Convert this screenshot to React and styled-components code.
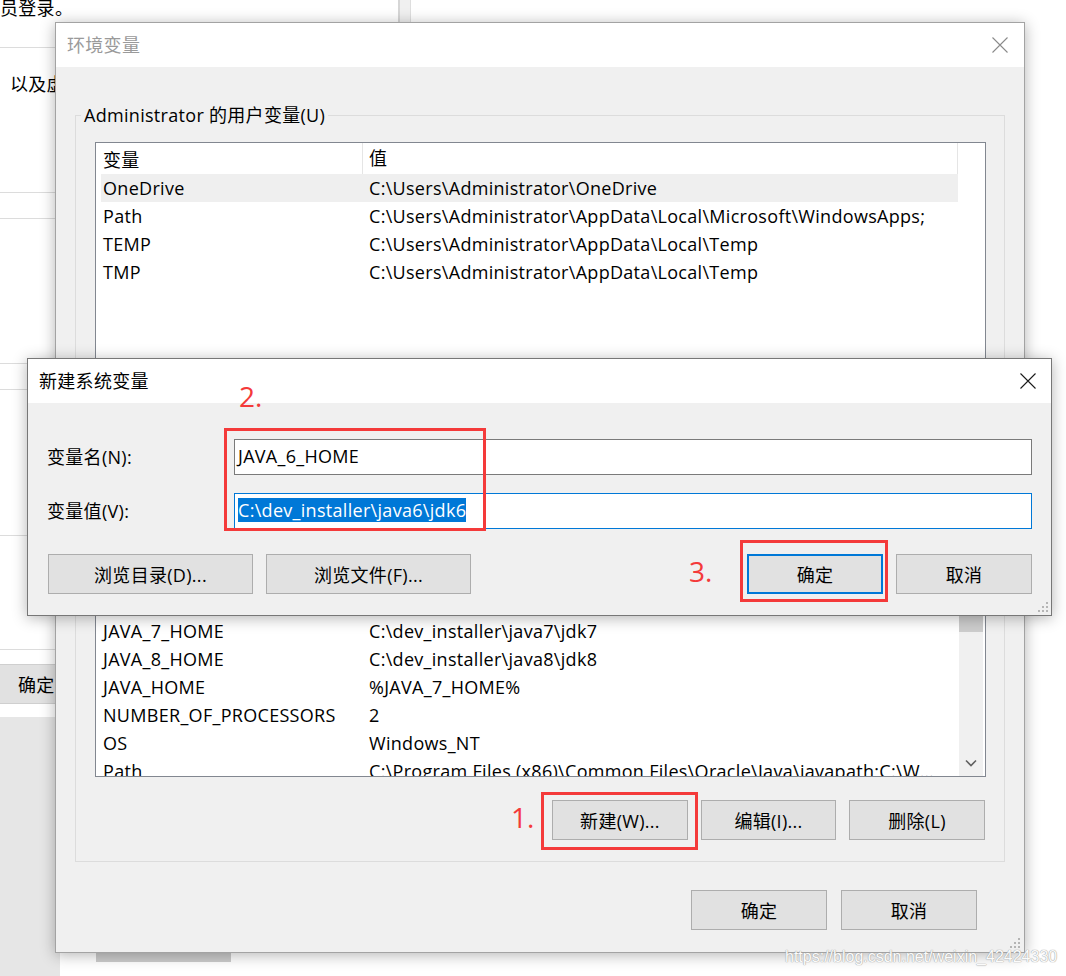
import React from "react";
import styled, { createGlobalStyle } from "styled-components";

const GlobalStyle = createGlobalStyle`
  html, body {
    margin: 0;
    padding: 0;
    background: #fff;
  }
  body {
    font-family: "Open Sans", "Noto Sans CJK SC", sans-serif;
    font-size: 18px;
    letter-spacing: 0.3px;
    color: #000;
  }
  * {
    box-sizing: border-box;
  }
`;

const userVars = [
  ["OneDrive", "C:\\Users\\Administrator\\OneDrive"],
  ["Path", "C:\\Users\\Administrator\\AppData\\Local\\Microsoft\\WindowsApps;"],
  ["TEMP", "C:\\Users\\Administrator\\AppData\\Local\\Temp"],
  ["TMP", "C:\\Users\\Administrator\\AppData\\Local\\Temp"],
];

const systemVars = [
  ["CLASSPATH", ".;%JAVA_HOME%\\lib;%JAVA_HOME%\\lib\\tools.jar"],
  ["ComSpec", "C:\\Windows\\system32\\cmd.exe"],
  ["DriverData", "C:\\Windows\\System32\\Drivers\\DriverData"],
  ["JAVA_7_HOME", "C:\\dev_installer\\java7\\jdk7"],
  ["JAVA_8_HOME", "C:\\dev_installer\\java8\\jdk8"],
  ["JAVA_HOME", "%JAVA_7_HOME%"],
  ["NUMBER_OF_PROCESSORS", "2"],
  ["OS", "Windows_NT"],
  ["Path", "C:\\Program Files (x86)\\Common Files\\Oracle\\Java\\javapath;C:\\Windows\\system32"],
];

// desktop canvas
const Desktop = styled.div`
  position: relative;
  width: 1066px;
  height: 976px;
  overflow: hidden;
  background: #fff;
`;

// window in the back (mostly hidden)
const BackWindow = styled.div`
  position: absolute;
  left: 0;
  top: 0;
  width: 411px;
  height: 717px;
  display: flex;
  background: #fff;
`;

const BackContent = styled.div`
  flex: 1;
  display: flex;
  flex-direction: column;
`;

const BackStrip = styled.div`
  width: 13px;
  background: #f0f0f0;
  border-left: 2px solid #d6d6d6;
  border-right: 1px solid #dedede;
`;

const BackRow = styled.div`
  height: ${p => p.$h}px;
  flex-shrink: 0;
  border-bottom: ${p => (p.$line ? "1px solid #dcdcdc" : "none")};
  padding-left: ${p => p.$indent || 0}px;
  padding-top: ${p => p.$top || 0}px;
  line-height: 24px;
  white-space: nowrap;
  overflow: hidden;
`;

const BackButton = styled.div`
  height: 40px;
  flex-shrink: 0;
  display: flex;
  align-items: center;
  padding-left: 18px;
  background: #e1e1e1;
  border-top: 1px solid #cfcfcf;
  border-bottom: 1px solid #cfcfcf;
`;

const SidePane = styled.div`
  position: absolute;
  left: 0;
  top: 717px;
  width: 60px;
  height: 259px;
  background: #e6e6e6;
`;

const TaskStub = styled.div`
  position: absolute;
  left: 96px;
  top: 952px;
  width: 135px;
  height: 10px;
  background: #cccccc;
`;

// dialogs
const Dialog = styled.div`
  position: absolute;
  left: ${p => p.$x}px;
  top: ${p => p.$y}px;
  width: ${p => p.$w}px;
  height: ${p => p.$h}px;
  display: flex;
  flex-direction: column;
  background: #f0f0f0;
  border: 1px solid ${p => (p.$active ? "#777777" : "#a3a3a3")};
  box-shadow: 0 2px 14px rgba(0, 0, 0, 0.3);
`;

const TitleBar = styled.div`
  height: 44px;
  flex-shrink: 0;
  display: flex;
  align-items: center;
  justify-content: space-between;
  padding: 0 ${p => p.$closeGap}px 0 11px;
  background: #fff;
`;

const Title = styled.span`
  color: ${p => (p.$inactive ? "#9a9a9a" : "#000")};
  font-size: 18px;
  padding-bottom: 3px;
`;

const EnvBody = styled.div`
  flex: 1;
  display: flex;
  flex-direction: column;
  padding: 36px 19px 0 19px;
`;

const GroupBox = styled.fieldset`
  margin: 0;
  padding: 0;
  min-width: 0;
  border: 1px solid #dcdcdc;
`;

const Legend = styled.legend`
  margin-left: 5px;
  padding: 0 3px;
  line-height: 24px;
  font-size: 18px;
`;

const GroupContent = styled.div`
  display: flex;
  flex-direction: column;
  padding: 15px 18px 21px 19px;
`;

const ListBox = styled.div`
  height: ${p => p.$h}px;
  margin-top: ${p => p.$mt || 0}px;
  display: flex;
  background: #fff;
  border: 1px solid #828790;
  overflow: hidden;
`;

const ListBody = styled.div`
  flex: 1;
  min-width: 0;
  padding-left: 5px;
  overflow: hidden;
`;

const HeaderRow = styled.div`
  height: 31px;
  display: flex;
  align-items: stretch;
  border-right: 1px solid #e5e5e5;
`;

const Row = styled.div`
  height: 28px;
  display: flex;
  align-items: center;
  background: ${p => (p.$selected ? "#efefef" : "transparent")};
`;

const NameCell = styled.div`
  width: 262px;
  flex-shrink: 0;
  padding-left: 2px;
  display: flex;
  align-items: center;
  white-space: nowrap;
  border-right: ${p => (p.$head ? "1px solid #e5e5e5" : "none")};
`;

const ValueCell = styled.div`
  flex: 1;
  min-width: 0;
  padding: 0 20px 0 6px;
  white-space: nowrap;
  overflow: hidden;
  text-overflow: ellipsis;
  line-height: ${p => (p.$head ? "31px" : "28px")};
`;

const Gutter = styled.div`
  width: 27px;
  flex-shrink: 0;
  display: flex;
  padding: 0 2px 0 1px;
`;

const Track = styled.div`
  flex: 1;
  display: flex;
  flex-direction: column;
  justify-content: space-between;
  align-items: center;
  background: #f0f0f0;
`;

const Thumb = styled.div`
  align-self: stretch;
  height: 90px;
  margin-top: 40px;
  background: #cdcdcd;
`;

const ChevronWrap = styled.div`
  height: 26px;
  display: flex;
  align-items: center;
  justify-content: center;
`;

const ButtonRow = styled.div`
  display: flex;
  justify-content: flex-end;
  gap: ${p => p.$gap || 13}px;
  margin-top: ${p => p.$mt || 0}px;
  padding-right: ${p => p.$pr || 0}px;
`;

const Button = styled.button`
  width: ${p => p.$w || 136}px;
  height: 40px;
  padding: 0;
  background: #e1e1e1;
  border: ${p => (p.$default ? "2px solid #0078d7" : "1px solid #adadad")};
  font-family: inherit;
  font-size: 18px;
  letter-spacing: inherit;
  color: #000;
  white-space: nowrap;
`;

const NewBody = styled.div`
  flex: 1;
  display: flex;
  flex-direction: column;
  padding: 36px 19px 0 19px;
`;

const FormGrid = styled.div`
  display: grid;
  grid-template-columns: 187px 1fr;
  row-gap: 18px;
  align-items: center;
`;

const FieldLabel = styled.label`
  white-space: nowrap;
  padding-bottom: 2px;
`;

const TextField = styled.div`
  height: 36px;
  display: flex;
  align-items: center;
  padding: 0 0 3px 3px;
  background: #fff;
  border: 1px solid ${p => (p.$focused ? "#0078d7" : "#7a7a7a")};
  white-space: nowrap;
`;

const SelectedText = styled.span`
  line-height: 24px;
  background: #0078d7;
  color: #fff;
`;

const DialogButtons = styled.div`
  display: flex;
  gap: 13px;
  margin-top: 25px;
  padding-left: 1px;
`;

const Spacer = styled.div`
  flex: 1;
`;

const GripSpot = styled.div`
  position: absolute;
  right: ${p => p.$r}px;
  bottom: ${p => p.$b}px;
  line-height: 0;
`;

// annotations drawn over the screenshot
const RedBox = styled.div`
  position: absolute;
  left: ${p => p.$x}px;
  top: ${p => p.$y}px;
  width: ${p => p.$w}px;
  height: ${p => p.$h}px;
  border: 3px solid #f43a3a;
`;

const StepLabel = styled.span`
  position: absolute;
  left: ${p => p.$x}px;
  top: ${p => p.$y}px;
  font-family: "Open Sans", sans-serif;
  font-size: 28px;
  line-height: 28px;
  letter-spacing: 0;
  color: #f43a3a;
`;

const Watermark = styled.div`
  position: absolute;
  left: 785px;
  top: 947px;
  font-family: "Liberation Sans", Arial, sans-serif;
  font-size: 16px;
  line-height: 20px;
  letter-spacing: 0;
  color: #fbfbfb;
  text-shadow: 0 0 1px #9d9d9d, 0 0 1px #9d9d9d;
  white-space: nowrap;
`;

function CloseIcon({ color }) {
  return (
    <svg width="16" height="16" viewBox="0 0 16 16">
      <path d="M0.5 0.5 L15.5 15.5 M15.5 0.5 L0.5 15.5" stroke={color} strokeWidth="1.1" fill="none" />
    </svg>
  );
}

function Grip({ r, b }) {
  const dots = [[8, 0], [4, 4], [8, 4], [0, 8], [4, 8], [8, 8]];
  return (
    <GripSpot $r={r} $b={b}>
      <svg width="10" height="10" viewBox="0 0 10 10">
        {dots.map(([x, y]) => (
          <rect key={x + "-" + y} x={x} y={y} width="2" height="2" fill="#b5b5b5" />
        ))}
      </svg>
    </GripSpot>
  );
}

function VarList({ height, mt, rows, selected, scroll }) {
  return (
    <ListBox $h={height} $mt={mt}>
      <ListBody>
        <HeaderRow>
          <NameCell $head>变量</NameCell>
          <ValueCell $head>值</ValueCell>
        </HeaderRow>
        {rows.map(([name, value], i) => (
          <Row key={name} $selected={i === selected}>
            <NameCell>{name}</NameCell>
            <ValueCell>{value}</ValueCell>
          </Row>
        ))}
      </ListBody>
      <Gutter>
        {scroll && (
          <Track>
            <Thumb />
            <ChevronWrap>
              <svg width="12" height="8" viewBox="0 0 12 8">
                <path d="M1 1.5 L6 6.5 L11 1.5" stroke="#606060" strokeWidth="1.6" fill="none" />
              </svg>
            </ChevronWrap>
          </Track>
        )}
      </Gutter>
    </ListBox>
  );
}

export default function App() {
  return (
    <Desktop>
      <GlobalStyle />

      <BackWindow>
        <BackContent>
          <BackRow $h={48} $line>
            <div style={{ marginTop: -4 }}>员登录。</div>
          </BackRow>
          <BackRow $h={145} $line $indent={10} $top={24}>以及虚拟机管理员</BackRow>
          <BackRow $h={26} $line />
          <BackRow $h={145} $line />
          <BackRow $h={26} $line />
          <BackRow $h={146} $line />
          <BackRow $h={114} $line />
          <BackRow $h={14} />
          <BackButton>确定</BackButton>
          <BackRow $h={13} />
        </BackContent>
        <BackStrip />
      </BackWindow>
      <SidePane />
      <TaskStub />

      <Dialog $x={55} $y={22} $w={970} $h={931}>
        <TitleBar $closeGap={16}>
          <Title $inactive>环境变量</Title>
          <CloseIcon color="#8a8a8a" />
        </TitleBar>
        <EnvBody>
          <GroupBox>
            <Legend>Administrator 的用户变量(U)</Legend>
            <GroupContent>
              <VarList height={270} rows={userVars} selected={0} />
              <ButtonRow $mt={23} $pr={1}>
                <Button>新建(N)...</Button>
                <Button $w={135}>编辑(E)...</Button>
                <Button>删除(D)</Button>
              </ButtonRow>
              <VarList height={276} mt={26} rows={systemVars} scroll />
              <ButtonRow $mt={23} $pr={1}>
                <Button>新建(W)...</Button>
                <Button $w={135}>编辑(I)...</Button>
                <Button>删除(L)</Button>
              </ButtonRow>
            </GroupContent>
          </GroupBox>
          <ButtonRow $mt={28} $gap={14} $pr={28}>
            <Button>确定</Button>
            <Button>取消</Button>
          </ButtonRow>
        </EnvBody>
        <Grip r={4} b={4} />
      </Dialog>

      <Dialog $x={27} $y={358} $w={1025} $h={258} $active>
        <TitleBar $closeGap={15}>
          <Title>新建系统变量</Title>
          <CloseIcon color="#1a1a1a" />
        </TitleBar>
        <NewBody>
          <FormGrid>
            <FieldLabel>变量名(N):</FieldLabel>
            <TextField>JAVA_6_HOME</TextField>
            <FieldLabel>变量值(V):</FieldLabel>
            <TextField $focused>
              <SelectedText>C:\dev_installer\java6\jdk6</SelectedText>
            </TextField>
          </FormGrid>
          <DialogButtons>
            <Button $w={205}>浏览目录(D)...</Button>
            <Button $w={205}>浏览文件(F)...</Button>
            <Spacer />
            <Button $default>确定</Button>
            <Button>取消</Button>
          </DialogButtons>
        </NewBody>
        <Grip r={3} b={3} />
      </Dialog>

      <StepLabel $x={239} $y={382}>2.</StepLabel>
      <RedBox $x={224} $y={428} $w={262} $h={103} />
      <StepLabel $x={689} $y={557}>3.</StepLabel>
      <RedBox $x={740} $y={540} $w={148} $h={62} />
      <StepLabel $x={511} $y={803}>1.</StepLabel>
      <RedBox $x={541} $y={792} $w={157} $h={58} />

      <Watermark>https://blog.csdn.net/weixin_42424330</Watermark>
    </Desktop>
  );
}
